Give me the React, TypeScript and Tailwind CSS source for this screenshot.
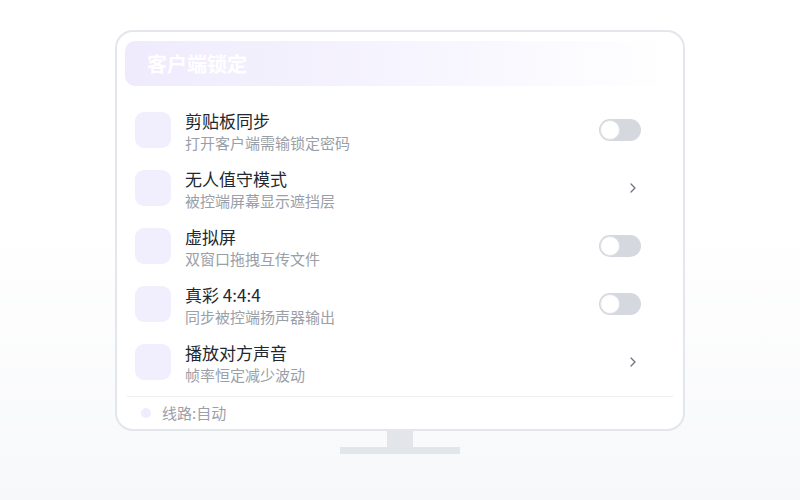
import React from "react";

const rows = [
  { t: "剪贴板同步", s: "打开客户端需输锁定密码", kind: "toggle" },
  { t: "无人值守模式", s: "被控端屏幕显示遮挡层", kind: "chev" },
  { t: "虚拟屏", s: "双窗口拖拽互传文件", kind: "toggle" },
  { t: "真彩 4:4:4", s: "同步被控端扬声器输出", kind: "toggle" },
  { t: "播放对方声音", s: "帧率恒定减少波动", kind: "chev" },
];

export default function App() {
  return (
    <div
      className="w-[800px] h-[500px] bg-gradient-to-b from-white from-45% to-[#f7f8fa] pt-[30px]"
      style={{ fontFamily: '"Noto Sans CJK SC", "Noto Sans", sans-serif' }}
    >
      <div className="w-[570px] h-[401px] mx-auto border-2 border-[#e3e6ea] rounded-[18px] bg-white pt-[9px] px-[8px] flex flex-col">
        <div className="h-[45px] rounded-[10px] bg-gradient-to-r from-[#efebfd] via-[#f6f4fe] to-white flex items-center pl-[22px]">
          <span className="text-white text-[20px] font-bold leading-none">客户端锁定</span>
        </div>
        <div className="mt-[15px] flex flex-col">
          {rows.map((r) => (
            <div key={r.t} className="h-[58px] flex items-center pl-[10px] pr-[34px]">
              <div className="w-[36px] h-[36px] rounded-[9px] bg-[#f1eefd] shrink-0" />
              <div className="ml-[14px] flex-1 flex flex-col mt-[2px]">
                <div className="text-[17px] leading-[22px] text-[#222831]">{r.t}</div>
                <div className="text-[15px] leading-[20px] text-[#9aa0a8] mt-[1px]">{r.s}</div>
              </div>
              {r.kind === "toggle" ? (
                <div className="w-[42px] h-[22px] rounded-full bg-[#d5d8de] relative shrink-0">
                  <div className="absolute left-[1px] top-[1px] w-[20px] h-[20px] rounded-full bg-white border border-[#dfe2e6]" />
                </div>
              ) : (
                <div className="w-[42px] flex justify-end pr-[5px] shrink-0">
                  <svg width="6" height="10" viewBox="0 0 6 10">
                    <polyline points="1,1 5,5 1,9" fill="none" stroke="#6b7280" strokeWidth="1.3" strokeLinecap="round" strokeLinejoin="round" />
                  </svg>
                </div>
              )}
            </div>
          ))}
        </div>
        <div className="mt-[5px] mx-[2px] h-px bg-[#eceef1]" />
        <div className="flex-1 flex items-center pl-[16px]">
          <div className="w-[10px] h-[10px] rounded-full bg-[#efecfd]" />
          <span className="ml-[11px] text-[15px] text-[#9aa0a8]">线路:自动</span>
        </div>
      </div>
      <div className="w-[26px] h-[16px] mx-auto bg-[#e2e5e9]" />
      <div className="w-[120px] h-[7px] mx-auto bg-[#e2e5e9]" />
    </div>
  );
}
